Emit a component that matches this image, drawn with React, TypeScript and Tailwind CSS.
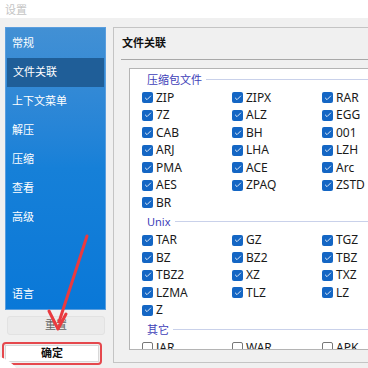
import { Check } from 'lucide-react';

const font = { fontFamily: '"Noto Sans", "Noto Sans CJK SC", sans-serif' };

const menu = ['常规', '文件关联', '上下文菜单', '解压', '压缩', '查看', '高级'];

const groups = [
  {
    title: '压缩包文件',
    items: ['ZIP', 'ZIPX', 'RAR', '7Z', 'ALZ', 'EGG', 'CAB', 'BH', '001', 'ARJ', 'LHA', 'LZH', 'PMA', 'ACE', 'Arc', 'AES', 'ZPAQ', 'ZSTD', 'BR'],
    checked: true,
  },
  {
    title: 'Unix',
    items: ['TAR', 'GZ', 'TGZ', 'BZ', 'BZ2', 'TBZ', 'TBZ2', 'XZ', 'TXZ', 'LZMA', 'TLZ', 'LZ', 'Z'],
    checked: true,
  },
  {
    title: '其它',
    items: ['JAR', 'WAR', 'APK'],
    checked: false,
  },
];

function Box({ label, checked }: { label: string; checked: boolean }) {
  return (
    <div className="flex items-center h-[17.5px] gap-[3px]">
      {checked ? (
        <div className="w-[11px] h-[11px] rounded-[2px] bg-[#1466c4] flex items-center justify-center">
          <Check className="w-[8px] h-[8px] text-white" strokeWidth={2.5} />
        </div>
      ) : (
        <div className="w-[11px] h-[11px] rounded-[2px] border border-[#777] bg-white" />
      )}
      <span className="text-[12px] text-[#1a1a1a] leading-none">{label}</span>
    </div>
  );
}

export default function App() {
  return (
    <div className="relative w-[368px] h-[368px] overflow-hidden bg-[#f0f0f0]" style={font}>
      {/* title bar */}
      <div className="h-[18px] bg-white flex items-center pl-[5px]">
        <span className="text-[11px] text-[#c4c4c4] leading-none">设置</span>
      </div>

      <div className="flex pt-[9px]">
        {/* left column */}
        <div className="w-[113px] shrink-0 pl-[5px] pr-[7px] flex flex-col">
          <div className="h-[283px] bg-gradient-to-b from-[#4290d4] via-[#1680d8] to-[#0978d8] border border-[#5a9ede] flex flex-col pt-[1px]">
            {menu.map((m) => (
              <div
                key={m}
                className={`h-[29px] flex items-center pl-[6px] text-[11px] text-white whitespace-nowrap ${m === '文件关联' ? 'bg-[#1f5e98] mx-[1px]' : ''}`}
              >
                {m}
              </div>
            ))}
            <div className="flex-1" />
            <div className="h-[29px] flex items-center pl-[6px] text-[11px] text-white">语言</div>
          </div>
          <div className="mt-[6px] ml-[2px] mr-[1px] h-[19px] rounded-[3px] bg-[#ebebeb] border border-[#e2e2e2] flex items-center justify-center text-[11px] text-[#666]">
            重置
          </div>
          <div className="mt-[7px] ml-[-3px] mr-[4px] h-[23px] rounded-[4px] border-2 border-[#e5484d] p-[1px]">
            <div className="h-full bg-white border border-[#d8d8d8] flex items-center justify-center text-[11px] text-[#111] font-semibold">
              确定
            </div>
          </div>
        </div>

        {/* right panel */}
        <div className="flex-1 min-w-0 overflow-hidden h-[336px] border-l border-t border-b border-[#c4c4c4] bg-[#f0f0f0] flex flex-col">
          <div className="h-[31px] shrink-0 flex items-center pl-[8px] text-[11px] font-bold text-[#111]">文件关联</div>
          <div className="ml-[7px] h-[1px] shrink-0 bg-[#a8a8a8]" />
          <div className="ml-[15px] mt-[8px] h-[282px] shrink-0 border-l border-t border-b border-[#b4b4b4] bg-white overflow-hidden pl-[12px]">
            {groups.map((g) => (
              <div key={g.title}>
                <div className="h-[20px] flex items-center gap-[4px] pl-[5px]">
                  <span className="text-[11px] text-[#4040b8] leading-none">{g.title}</span>
                  <div className="flex-1 h-[1px] bg-[#c9d1ea]" />
                </div>
                <div className="grid grid-cols-[90px_90px_90px]">
                  {g.items.map((it) => (
                    <Box key={it} label={it} checked={g.checked} />
                  ))}
                </div>
              </div>
            ))}
          </div>
        </div>
      </div>

      {/* red annotation arrow */}
      <svg className="absolute left-0 top-0 pointer-events-none" width="368" height="368">
        <line x1="87" y1="236" x2="59" y2="322" stroke="#ea3a3f" strokeWidth="3" strokeLinecap="round" />
        <path d="M49 311 L58 329 L66 314" fill="none" stroke="#ea3a3f" strokeWidth="3" strokeLinecap="round" strokeLinejoin="round" />
      </svg>

      {/* corner artifact */}
      <div className="absolute left-[-40px] top-[356px] w-[62px] h-[60px] rounded-full bg-white" />
    </div>
  );
}
